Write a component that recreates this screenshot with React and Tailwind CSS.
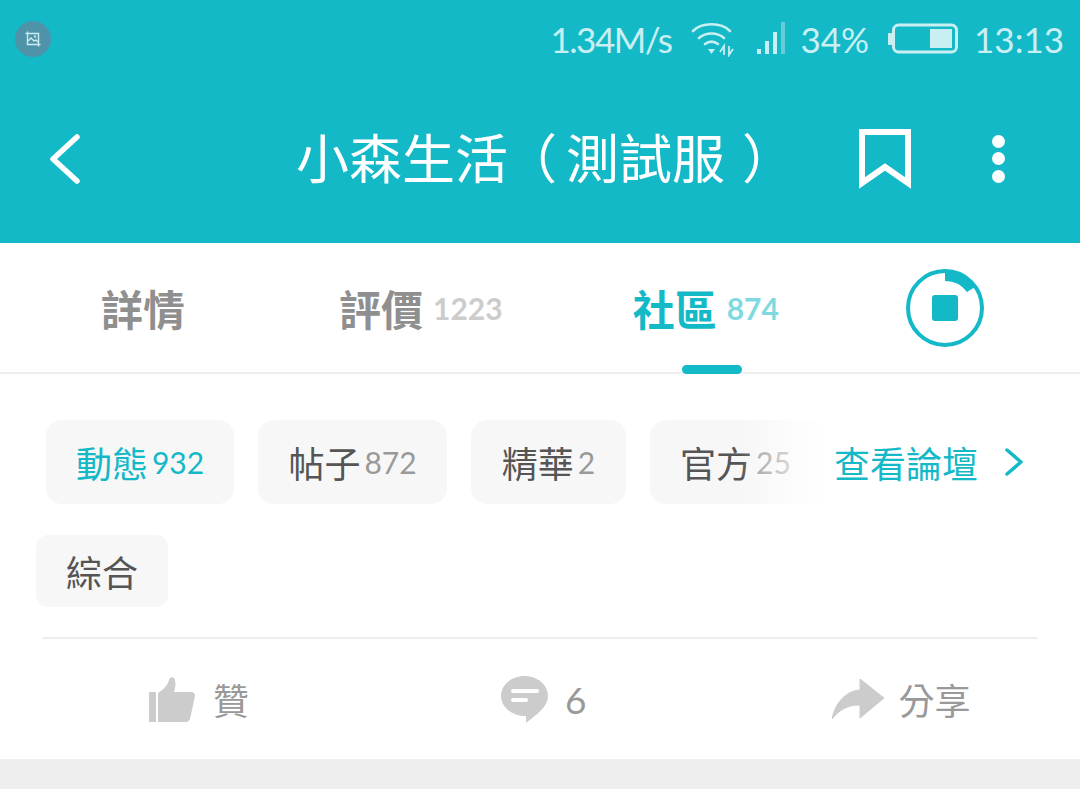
import React from "react";

const cjk = "font-['Noto_Sans_CJK_TC','Noto_Sans',sans-serif]";
const latin = "font-['Lato','Noto_Sans_CJK_TC',sans-serif]";

function Chip({ label, count, active, className = "" }) {
  return (
    <div className={`flex h-[84px] shrink-0 items-center justify-center gap-[4px] rounded-[16px] bg-[#f7f7f7] ${className}`}>
      <span className={`text-[36px] leading-none ${active ? "text-[#14b9c8]" : "text-[#555555]"}`}>{label}</span>
      {count && <span className={`${latin} text-[30px] leading-none ${active ? "text-[#14b9c8]" : "text-[#999999]"}`}>{count}</span>}
    </div>
  );
}

function Tab({ label, count, active, className = "" }) {
  return (
    <div className={`flex items-center gap-[10px] ${className}`}>
      <span className={`text-[42px] leading-none font-bold ${active ? "text-[#14b9c8]" : "text-[#8f8f8f]"}`}>{label}</span>
      {count && <span className={`${latin} text-[30px] leading-none font-bold ${active ? "text-[#7fd9e1]" : "text-[#cccccc]"}`}>{count}</span>}
    </div>
  );
}

export default function App() {
  return (
    <div className={`${cjk} h-[809px] w-[1080px] overflow-hidden bg-white`}>
      <header className="h-[243px] bg-[#14b9c8]">
        <div className="flex h-[78px] items-center pl-[15px] pr-[16px]">
          <div className="flex h-[36px] w-[36px] items-center justify-center rounded-full bg-[#4f93a8]">
            <svg width="16" height="16" viewBox="0 0 16 16" fill="none" stroke="#c9eef2" strokeWidth="1.4">
              <path d="M2.5 0.5V13.5H15.5M0.5 2.5H13.5V15.5" />
              <path d="M3 10l3-3 3 3 2-1 2 2" />
              <rect x="9" y="4.5" width="2" height="2" fill="#c9eef2" stroke="none" />
            </svg>
          </div>
          <div className={`${latin} ml-auto flex items-center text-[35px] leading-none text-[#c9eff3]`}>
            <span className="tracking-[-1.5px]">1.34M/s</span>
            <svg className="ml-[20px]" width="44" height="36" viewBox="0 0 44 36" fill="none" stroke="#c9eff3" strokeLinecap="round">
              <path d="M2 10C11 1 30 1 39 10" strokeWidth="2.6" />
              <path d="M8 17C15 11 26 11 33 17" strokeWidth="2.6" />
              <path d="M14 23C18 20 23 20 27 23" strokeWidth="2.6" />
              <path d="M17 28h7l-3.500 5z" fill="#c9eff3" stroke="none" />
              <path d="M33 34V25l-4 6M38 25v9l4-6" strokeWidth="1.8" strokeLinecap="butt" />
            </svg>
            <svg className="ml-[22px]" width="30" height="36" viewBox="0 0 30 36">
              <rect x="0" y="28" width="4" height="5" fill="#c9eff3" />
              <rect x="8" y="20" width="4" height="13" fill="#c9eff3" />
              <rect x="16" y="11" width="4" height="22" fill="#c9eff3" />
              <rect x="24" y="1" width="4" height="32" fill="#67cbd8" />
            </svg>
            <span className="ml-[13px]">34%</span>
            <svg className="ml-[19px]" width="70" height="32" viewBox="0 0 70 32" fill="none">
              <rect x="0" y="10" width="4" height="12" rx="1" fill="#c9eff3" />
              <rect x="5.500" y="2" width="63" height="27" rx="5" stroke="#c9eff3" strokeWidth="3" />
              <rect x="42" y="6" width="22" height="19" fill="#c9eff3" />
            </svg>
            <span className="ml-[16px]">13:13</span>
          </div>
        </div>
        <div className="flex h-[165px] items-center pb-[4px] pl-[50px] pr-[75px]">
          <svg width="30" height="50" viewBox="0 0 30 50" fill="none" stroke="white" strokeWidth="5.500" strokeLinecap="round" strokeLinejoin="round">
            <path d="M27 3L3 25l24 22" />
          </svg>
          <h1 className="ml-[216px] flex pb-[4px] text-[53px] leading-none font-normal whitespace-pre text-white">
            <span>小森生活</span>
            <span className="ml-[-4px]">（</span>
            <span className="ml-[9px]">測試服</span>
            <span className="ml-[17px]">）</span>
          </h1>
          <svg className="ml-auto" width="52" height="60" viewBox="0 0 52 60" fill="none" stroke="white" strokeWidth="6">
            <path d="M3 3H49V54L26 38 3 54Z" />
          </svg>
          <div className="ml-[81px] flex h-[48px] flex-col justify-between">
            <span className="h-[13px] w-[13px] rounded-full bg-white" />
            <span className="h-[13px] w-[13px] rounded-full bg-white" />
            <span className="h-[13px] w-[13px] rounded-full bg-white" />
          </div>
        </div>
      </header>

      <nav className="relative flex h-[131px] items-center border-b-2 border-[#eeeeee] pl-[101px]">
        <Tab label="詳情" />
        <Tab className="ml-[154px]" label="評價" count="1223" />
        <Tab className="ml-[130px]" label="社區" count="874" active />
        <svg className="ml-[127px]" width="78" height="78" viewBox="0 0 78 78" fill="none">
          <circle cx="39" cy="39" r="37" stroke="#14b9c8" strokeWidth="4" />
          <path d="M39 2A37 37 0 0 1 69 18L61 23A27 27 0 0 0 39 12Z" fill="#14b9c8" />
          <rect x="26" y="26" width="26" height="26" rx="3" fill="#14b9c8" />
        </svg>
        <span className="absolute bottom-[-2px] left-[682px] h-[9px] w-[60px] rounded-full bg-[#14b9c8]" />
      </nav>

      <section className="relative mt-[46px] flex items-center gap-[24px] pl-[46px]">
        <Chip label="動態" count="932" active className="w-[188px]" />
        <Chip label="帖子" count="872" className="w-[189px]" />
        <Chip label="精華" count="2" className="w-[155px]" />
        <Chip label="官方" count="25" className="w-[171px] rounded-r-none" />
        <div className="absolute top-0 bottom-0 left-[740px] w-[82px] bg-gradient-to-r from-white/0 to-white" />
        <div className="ml-[-11px] flex items-center">
          <span className="text-[36px] leading-none text-[#14b9c8]">查看論壇</span>
          <svg className="ml-[26px]" width="20" height="30" viewBox="0 0 20 30" fill="none" stroke="#14b9c8" strokeWidth="3.500" strokeLinecap="round" strokeLinejoin="round">
            <path d="M3 3l14 12L3 27" />
          </svg>
        </div>
      </section>

      <div className="mt-[31px] ml-[36px] flex h-[72px] w-[132px] items-center justify-center rounded-[12px] bg-[#f7f7f7] text-[36px] leading-none text-[#555555]">綜合</div>

      <div className="mx-[42px] mt-[30px] h-[2px] bg-[#eeeeee]" />

      <footer className="flex h-[120px] items-center text-[36px] leading-none text-[#999999]">
        <div className="ml-[149px] flex items-center">
          <svg width="46" height="45" viewBox="0 0 46 45" fill="#cccccc">
            <rect x="0" y="15" width="7" height="30" />
            <path d="M9 45V16C14 13 19 8 20 3C21 0 25 -1 26 3C27 7 26 12 25 15H42C45 15 46 17 46 19L41 42C40 44 39 45 37 45Z" />
          </svg>
          <span className="ml-[18px] text-[#999999]">贊</span>
        </div>
        <div className="ml-[252px] flex items-center">
          <svg width="47" height="47" viewBox="0 0 47 47">
            <path d="M23.500 0C36.500 0 47 9 47 20C47 31 36 38 25 47V40C11 40 0 31 0 20C0 9 10.500 0 23.500 0Z" fill="#cccccc" />
            <rect x="10" y="13" width="28" height="4" rx="2" fill="white" />
            <rect x="10" y="22" width="17" height="4" rx="2" fill="white" />
          </svg>
          <span className={`${latin} ml-[17px] text-[37px] text-[#999999]`}>6</span>
        </div>
        <div className="ml-[246px] flex items-center">
          <svg width="53" height="42" viewBox="0 0 53 42" fill="#cccccc">
            <path d="M28 1L52 20L28 40V27C16 27 8 31 0 41C3 26 13 13 28 12Z" stroke="#cccccc" strokeLinejoin="round" />
          </svg>
          <span className="ml-[13px] text-[#999999]">分享</span>
        </div>
      </footer>

      <div className="h-[30px] bg-[#eeeeee]" />
    </div>
  );
}
